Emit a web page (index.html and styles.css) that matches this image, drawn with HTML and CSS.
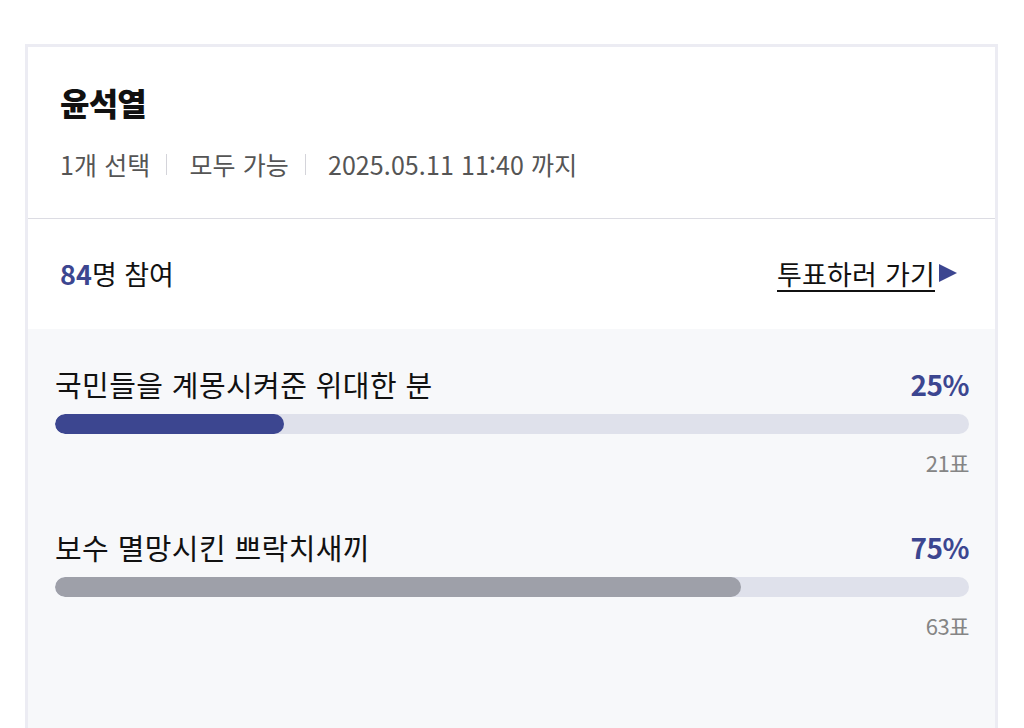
FILE: index.html
```html
<!DOCTYPE html>
<html lang="ko">
<head>
<meta charset="utf-8">
<link rel="stylesheet" href="styles.css">
</head>
<body>
<div class="card">
  <div class="head">
    <h1 class="title">윤석열</h1>
    <div class="meta">
      <span>1개 선택</span><i class="sep"></i><span>모두 가능</span><i class="sep"></i><span>2025.05.11 11:40 까지</span>
    </div>
  </div>
  <div class="count-row">
    <div class="count"><b>84</b>명 참여</div>
    <a class="go" href="#"><span class="go-text">투표하러 가기</span><svg class="tri" width="20" height="20" viewBox="0 0 20 20"><path d="M1 1 L19 10 L1 19 Z" fill="#3c4690"/></svg></a>
  </div>
  <div class="results">
    <div class="item">
      <div class="item-top"><span class="label">국민들을 계몽시켜준 위대한 분</span><span class="pct">25%</span></div>
      <div class="track"><div class="fill fill-blue" style="width:25%"></div></div>
      <div class="votes">21표</div>
    </div>
    <div class="item">
      <div class="item-top"><span class="label">보수 멸망시킨 쁘락치새끼</span><span class="pct">75%</span></div>
      <div class="track"><div class="fill fill-gray" style="width:75%"></div></div>
      <div class="votes">63표</div>
    </div>
  </div>
</div>
</body>
</html>
```
FILE: styles.css
```css
* { box-sizing: border-box; }
html, body { margin: 0; padding: 0; background: #fff; }
body {
  font-family: "Noto Sans CJK KR", "Noto Sans", sans-serif;
  padding: 44px 0 0 25px;
  overflow: hidden;
  height: 728px;
}
.card {
  width: 973px;
  border: 3px solid #ececf3;
  border-bottom: none;
  min-height: 700px;
  background: #f7f8fa;
}
.head {
  background: #fff;
  padding: 35px 32px 39px;
  border-bottom: 1px solid #dcdce3;
}
.title {
  margin: 0;
  font-size: 32px;
  line-height: 40px;
  font-weight: 900;
  color: #111;
  letter-spacing: -0.8px;
}
.meta {
  margin-top: 27px;
  display: flex;
  align-items: center;
  font-size: 25px;
  line-height: 30px;
  color: #555;
  letter-spacing: 0.1px;
}
.sep {
  display: inline-block;
  width: 1px;
  height: 21px;
  background: #d4d4da;
  margin: 0 22px 0 16px;
}
.count-row {
  background: #fff;
  height: 110px;
  display: flex;
  align-items: center;
  justify-content: space-between;
  padding: 0 37px 2px 32px;
}
.count {
  font-size: 27px;
  color: #111;
  letter-spacing: 0;
}
.count b { color: #3c4690; font-weight: 700; }
.go {
  display: flex;
  align-items: center;
  color: #111;
  text-decoration: none;
}
.go-text {
  font-size: 27px;
  letter-spacing: 0.2px;
  text-decoration: underline;
  text-underline-offset: 5px;
  text-decoration-thickness: 2px;
}
.tri { margin-left: 3px; }
.results {
  padding: 38px 26px 0 27px;
}
.item + .item { margin-top: 55px; }
.item-top {
  display: flex;
  justify-content: space-between;
  align-items: center;
  line-height: 34px;
}
.label {
  font-size: 29px;
  color: #111;
  letter-spacing: 0.4px;
}
.pct {
  font-size: 28px;
  font-weight: 700;
  color: #3c4690;
  letter-spacing: -0.5px;
}
.track {
  margin-top: 13px;
  height: 20px;
  border-radius: 10px;
  background: #dfe1eb;
  overflow: hidden;
}
.fill { height: 100%; border-radius: 10px; }
.fill-blue { background: #3c4690; }
.fill-gray { background: #9ea0a9; }
.votes {
  margin-top: 15px;
  text-align: right;
  font-size: 22px;
  line-height: 26px;
  color: #858585;
  letter-spacing: -0.5px;
}
```
